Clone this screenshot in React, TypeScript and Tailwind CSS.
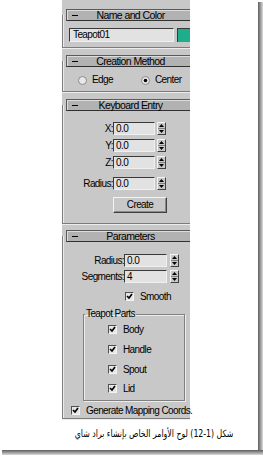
const ui = "font-['Liberation_Sans',sans-serif] text-[10px] tracking-[-0.6px] leading-none text-black whitespace-nowrap"

function Header({ title }: { title: string }) {
  return (
    <div className="-mt-[6px] ml-[3px] h-[12px] flex items-center bg-[#b2b2b2] border border-r-0 border-t-[#5a5a5a] border-l-[#5a5a5a] border-b-[#303030] shadow-[inset_1px_1px_0_#dcdcdc] pl-[5px]">
      <span className="w-[6px] h-[1px] bg-black" />
      <span className="flex-1 text-center pr-[7px] text-[10.5px]">{title}</span>
    </div>
  )
}

function Spinner() {
  return (
    <div className="w-[9px] h-[13px] flex flex-col bg-[#c8c8c8] border border-t-[#f4f4f4] border-l-[#f4f4f4] border-r-[#404040] border-b-[#404040]">
      <div className="flex-1 flex items-center justify-center border-b border-[#808080]">
        <svg width="5" height="3" viewBox="0 0 5 3">
          <path d="M2.5 0 L5 3 L0 3 Z" fill="#000" />
        </svg>
      </div>
      <div className="flex-1 flex items-center justify-center">
        <svg width="5" height="3" viewBox="0 0 5 3">
          <path d="M0 0 L5 0 L2.5 3 Z" fill="#000" />
        </svg>
      </div>
    </div>
  )
}

function Field({ value, width }: { value: string; width: string }) {
  return (
    <div className={`${width} h-[13px] flex items-center pl-[2px] bg-[#e2e2e2] border border-t-[#3a3a3a] border-l-[#3a3a3a] border-r-[#f0f0f0] border-b-[#f0f0f0]`}>
      {value}
    </div>
  )
}

function Check() {
  return (
    <div className="w-[9px] h-[9px] shrink-0 flex items-center justify-center bg-[#e6e6e6] border border-t-[#505050] border-l-[#505050] border-r-[#f4f4f4] border-b-[#f4f4f4]">
      <svg width="7" height="7" viewBox="0 0 7 7">
        <path d="M1 3 L3 5 L6 1" stroke="#000" strokeWidth="1.6" fill="none" />
      </svg>
    </div>
  )
}

function Radio({ on }: { on: boolean }) {
  return (
    <svg width="9" height="9" viewBox="0 0 9 9">
      <circle cx="4.5" cy="4.5" r="4" fill="#e8e8e8" stroke="#8a8a8a" strokeWidth="1" />
      {on && <circle cx="4.5" cy="4.5" r="1.8" fill="#000" />}
    </svg>
  )
}

function CheckRow({ label, className }: { label: string; className: string }) {
  return (
    <div className={`flex items-center h-[9px] ${className}`}>
      <Check />
      <span className="ml-[6px]">{label}</span>
    </div>
  )
}

function NumRow({ label, value, labelW, fieldW, gap }: { label: string; value: string; labelW: string; fieldW: string; gap: string }) {
  return (
    <div className="flex items-center h-[13px]">
      <span className={`${labelW} text-right`}>{label}</span>
      <Field value={value} width={fieldW} />
      <div className={gap}>
        <Spinner />
      </div>
    </div>
  )
}

const frame =
  'flex flex-col border-l border-b border-[#7c7c7c] shadow-[inset_1px_0_0_#ececec,0_1px_0_#ececec]'

export default function App() {
  return (
    <div className="w-[263px] h-[457px] bg-white overflow-hidden">
      <div className="flex">
        <div className="w-[258px] h-[450px]">
          <div className={`ml-[62px] w-[128px] h-[420px] bg-[#c8c8c8] pt-[15px] ${ui}`}>
            {/* Name and Color */}
            <div className={`h-[33px] ${frame}`}>
              <Header title="Name and Color" />
              <div className="flex mt-[7px]">
                <div className="ml-[6px] w-[105px] h-[14px] flex items-center pl-[3px] bg-[#e2e2e2] border border-t-[#3a3a3a] border-l-[#3a3a3a] border-r-[#f0f0f0] border-b-[#f0f0f0]">
                  Teapot01
                </div>
                <div className="ml-[3px] flex-1 h-[14px] bg-[#1fae8c] border-t border-l border-[#3a3a3a]" />
              </div>
            </div>

            {/* Creation Method */}
            <div className={`mt-[13px] h-[31px] ${frame}`}>
              <Header title="Creation Method" />
              <div className="flex items-center mt-[7px] h-[12px] ml-[15px]">
                <div className="w-[63px] flex items-center">
                  <Radio on={false} />
                  <span className="ml-[5px]">Edge</span>
                </div>
                <div className="flex items-center">
                  <Radio on={true} />
                  <span className="ml-[5px]">Center</span>
                </div>
              </div>
            </div>

            {/* Keyboard Entry */}
            <div className={`mt-[13px] h-[119px] ${frame}`}>
              <Header title="Keyboard Entry" />
              <div className="flex flex-col mt-[11px] gap-[4px]">
                <NumRow label="X:" value="0.0" labelW="w-[50px]" fieldW="w-[42px]" gap="ml-[2px]" />
                <NumRow label="Y:" value="0.0" labelW="w-[50px]" fieldW="w-[42px]" gap="ml-[2px]" />
                <NumRow label="Z:" value="0.0" labelW="w-[50px]" fieldW="w-[42px]" gap="ml-[2px]" />
                <div className="mt-[4px]">
                  <NumRow label="Radius:" value="0.0" labelW="w-[50px]" fieldW="w-[42px]" gap="ml-[2px]" />
                </div>
              </div>
              <div className="ml-[50px] mt-[7px] w-[54px] h-[16px] flex items-center justify-center bg-[#c8c8c8] border border-t-[#f4f4f4] border-l-[#f4f4f4] border-r-[#404040] border-b-[#404040] shadow-[inset_-1px_-1px_0_#8a8a8a]">
                Create
              </div>
            </div>

            {/* Parameters */}
            <div className={`mt-[12px] h-[183px] ${frame}`}>
              <Header title="Parameters" />
              <div className="flex flex-col mt-[12px] gap-[3px]">
                <NumRow label="Radius:" value="0.0" labelW="w-[61px]" fieldW="w-[43px]" gap="ml-[3px]" />
                <NumRow label="Segments:" value="4" labelW="w-[61px]" fieldW="w-[43px]" gap="ml-[3px]" />
              </div>
              <CheckRow label="Smooth" className="ml-[62px] mt-[9px]" />
              <fieldset className="ml-[20px] mt-[8px] w-[102px] h-[92px] border border-[#808080] shadow-[inset_1px_1px_0_#ececec,1px_1px_0_#ececec] px-0 pt-[6px] pb-0">
                <legend className="ml-[1px] px-[1px] leading-[10px]">Teapot Parts</legend>
                <CheckRow label="Body" className="ml-[24px]" />
                <CheckRow label="Handle" className="ml-[24px] mt-[11px]" />
                <CheckRow label="Spout" className="ml-[24px] mt-[11px]" />
                <CheckRow label="Lid" className="ml-[24px] mt-[10px]" />
              </fieldset>
              <CheckRow label="Generate Mapping Coords." className="ml-[8px] mt-[5px]" />
            </div>
          </div>
          <div className="mt-[9px] pr-[25px] flex justify-end">
            <p
              dir="rtl"
              className="inline-block origin-right scale-x-[0.78] font-['DejaVu_Sans',sans-serif] text-[10px] leading-none text-black whitespace-nowrap"
            >
              شكل (1-12) لوح الأوامر الخاص بإنشاء براد شاي
            </p>
          </div>
        </div>
        <div className="w-[5px] h-[448px] mt-[2px] bg-gradient-to-r from-[#5e5e5e] to-[#dcdcdc]" />
      </div>
      <div className="ml-[2px] w-[261px] h-[5px] bg-gradient-to-b from-[#5e5e5e] to-[#dcdcdc]" />
    </div>
  )
}
